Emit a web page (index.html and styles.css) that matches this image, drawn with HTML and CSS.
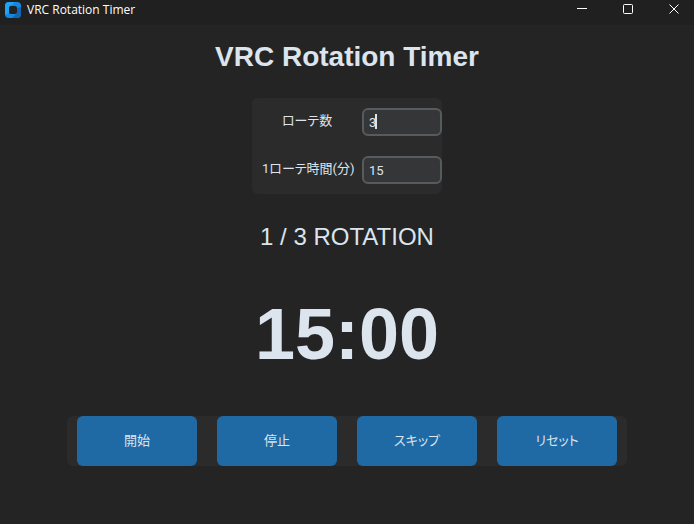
FILE: index.html
```html
<!DOCTYPE html>
<html lang="ja">
<head>
<meta charset="utf-8">
<meta name="viewport" content="width=device-width, initial-scale=1">
<title>VRC Rotation Timer</title>
<link rel="stylesheet" href="styles.css">
</head>
<body>
<header class="titlebar">
  <svg class="app-icon" viewBox="0 0 16 16" aria-hidden="true">
    <path fill="#1689de" d="M4 0h8a4 4 0 0 1 4 4v8a4 4 0 0 1-4 4H4a4 4 0 0 1-4-4V4a4 4 0 0 1 4-4z"/>
    <path fill="#20a4f5" d="M4 0h6L4 5v6L0 13V4a4 4 0 0 1 4-4z"/>
    <path fill="#1167b5" d="M16 5v7a4 4 0 0 1-4 4H7l5-5V6z"/>
    <rect x="4" y="4" width="8" height="8" rx="2" fill="#202224"/>
  </svg>
  <span class="window-title">VRC Rotation Timer</span>
  <div class="window-controls">
    <button type="button" aria-label="最小化"><svg viewBox="0 0 12 12"><path d="M1 5.500h10"/></svg></button>
    <button type="button" aria-label="最大化"><svg viewBox="0 0 12 12"><rect x="1.500" y="1.500" width="9" height="9" rx="1"/></svg></button>
    <button type="button" aria-label="閉じる"><svg viewBox="0 0 12 12"><path d="M1.500 1.500l9 9M10.500 1.500l-9 9"/></svg></button>
  </div>
</header>
<main class="timer">
  <h1>VRC Rotation Timer</h1>
  <form class="settings">
    <label for="count">ローテ数</label>
    <div class="field"><input id="count" type="text" inputmode="numeric" value="3"><span class="caret"></span></div>
    <label for="minutes">1ローテ時間(分)</label>
    <div class="field"><input id="minutes" type="text" inputmode="numeric" value="15"></div>
  </form>
  <p class="rotation">1 / 3 ROTATION</p>
  <p class="clock">15:00</p>
  <div class="actions">
    <button type="button">開始</button>
    <button type="button">停止</button>
    <button type="button">スキップ</button>
    <button type="button">リセット</button>
  </div>
</main>
</body>
</html>
```
FILE: styles.css
```css
* {
  box-sizing: border-box;
}

body {
  margin: 0;
  min-height: 100vh;
  background: #242424;
  color: #dce4ee;
  font-family: Roboto, "Noto Sans CJK JP", sans-serif;
  font-size: 13px;
}

.titlebar {
  display: flex;
  align-items: center;
  height: 25px;
  padding: 0 0 6px 5px;
  gap: 6px;
  background: #202020;
  color: #fff;
}

.app-icon {
  width: 16px;
  height: 16px;
}

.window-title {
  font: 12px/16px "Open Sans", sans-serif;
}

.window-controls {
  display: flex;
  margin-left: auto;
}

.window-controls button {
  display: grid;
  place-items: center;
  width: 46px;
  height: 19px;
  padding: 0 0 1px 6px;
  border: 0;
  background: none;
}

.window-controls svg {
  width: 12px;
  height: 12px;
  fill: none;
  stroke: #fff;
}

.timer {
  display: flex;
  flex-direction: column;
  align-items: center;
}

h1,
.rotation,
.clock {
  margin: 0;
  font-family: "Liberation Sans", Arial, sans-serif;
}

h1 {
  padding: 16px 0;
  font-size: 28px;
  line-height: 32px;
}

.settings {
  display: grid;
  grid-template-columns: 90px 80px;
  align-items: center;
  gap: 20px 10px;
  margin-top: 9px;
  padding: 10px 0 10px 10px;
  border-radius: 6px;
  background: #2b2b2b;
}

.settings label,
.actions button {
  font-weight: 400;
  font-feature-settings: "palt";
}

.settings label {
  text-align: center;
  line-height: 26px;
  padding-bottom: 2px;
  white-space: nowrap;
}

.field {
  position: relative;
  height: 28px;
}

.field input {
  width: 100%;
  height: 100%;
  padding: 0 5px;
  border: 2px solid #565b5e;
  border-radius: 6px;
  background: #343638;
  color: #dce4ee;
  font: 13px Roboto, sans-serif;
}

.caret {
  position: absolute;
  top: 6px;
  left: 13px;
  width: 2px;
  height: 15px;
  background: #dce4ee;
}

.rotation {
  margin-top: 29px;
  font-size: 24px;
  line-height: 28px;
}

.clock {
  margin-top: 42px;
  font-size: 72px;
  font-weight: bold;
  line-height: 82px;
}

.actions {
  display: flex;
  gap: 20px;
  margin-top: 41px;
  padding: 0 10px;
  border-radius: 6px;
  background: #2b2b2b;
}

.actions button {
  width: 120px;
  height: 50px;
  padding: 0 0 4px;
  border: 0;
  border-radius: 6px;
  background: #1f6aa5;
  color: #dce4ee;
  font-family: inherit;
  font-size: 13px;
}
```
